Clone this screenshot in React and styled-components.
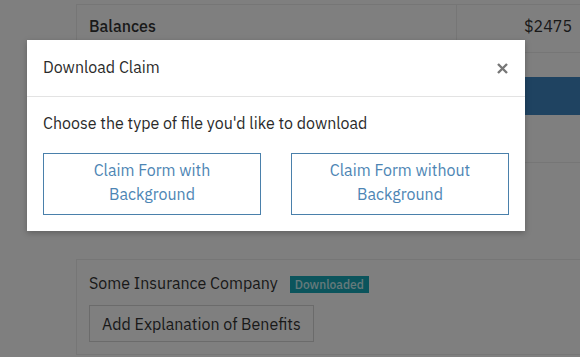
import React from "react";
import styled, { createGlobalStyle } from "styled-components";

const Global = createGlobalStyle`
  html, body { margin: 0; padding: 0; background: #fff; }
  body { font-family: "IBM Plex Sans", Roboto, "Liberation Sans", sans-serif; color: #333; }
  * { box-sizing: border-box; }
`;

const Page = styled.div`
  position: relative;
  width: 580px;
  height: 357px;
  overflow: hidden;
  padding: 4px 0 0 76px;
  display: flex;
  flex-direction: column;
`;

const Table = styled.div`
  width: 560px;
  border-left: 1px solid #ececec;
  border-top: 1px solid #ececec;
`;

const Row = styled.div`
  display: grid;
  grid-template-columns: 380px 1fr;
  height: 48px;
  border-bottom: 1px solid #ececec;
`;

const Cell = styled.div`
  display: flex;
  align-items: center;
  padding: 0 12px 6px 12px;
  font-size: 16px;
  font-weight: ${(p) => (p.$bold ? 500 : 400)};
  color: #333;
  justify-content: ${(p) => (p.$right ? "flex-end" : "flex-start")};
  border-right: ${(p) => (p.$divider ? "1px solid #ececec" : "none")};
  padding-right: ${(p) => (p.$right ? "64px" : "12px")};
`;

const Spacer = styled.div`
  height: ${(p) => p.$h}px;
`;

const BlueBar = styled.div`
  width: 560px;
  height: 38px;
  background: #3e86c2;
`;

const Section = styled.div`
  width: 560px;
  height: 48px;
  border-bottom: 1px solid #ececec;
`;

const Card = styled.div`
  width: 560px;
  height: 96px;
  border: 1px solid #ececec;
  padding: 12px 12px;
  display: flex;
  flex-direction: column;
  gap: 11px;
`;

const CardTitle = styled.div`
  display: flex;
  align-items: center;
  gap: 12px;
  font-size: 16px;
  line-height: 22px;
  color: #333;
`;

const Badge = styled.span`
  display: inline-flex;
  align-items: center;
  height: 17px;
  margin-top: 3px;
  padding: 0 5px;
  background: #17a9b8;
  color: #cdf3f6;
  font-size: 12px;
  font-weight: 500;
`;

const GhostButton = styled.button`
  align-self: flex-start;
  height: 37px;
  padding: 0 12px;
  background: #fff;
  border: 1px solid #d6d6d6;
  font-family: inherit;
  font-size: 16px;
  color: #333;
`;

const Overlay = styled.div`
  position: absolute;
  inset: 0;
  background: rgba(0, 0, 0, 0.5);
`;

const Modal = styled.div`
  position: absolute;
  left: 27px;
  top: 40px;
  width: 498px;
  background: #fff;
  box-shadow: 0 2px 6px rgba(0, 0, 0, 0.25);
`;

const ModalHeader = styled.div`
  display: flex;
  align-items: center;
  justify-content: space-between;
  height: 57px;
  padding: 0 16px 3px 16px;
  border-bottom: 1px solid #e3e3e3;
`;

const ModalTitle = styled.div`
  font-size: 16px;
  color: #2a2a2a;
`;

const Close = styled.button`
  display: flex;
  align-items: center;
  justify-content: center;
  width: 20px;
  height: 20px;
  padding: 0;
  margin-right: -3px;
  margin-top: 4px;
  border: none;
  background: none;
`;

const ModalBody = styled.div`
  padding: 14px 16px 16px;
  display: flex;
  flex-direction: column;
  gap: 18px;
`;

const Prompt = styled.div`
  font-size: 16px;
  line-height: 24px;
  color: #2a2a2a;
`;

const Choices = styled.div`
  display: grid;
  grid-template-columns: 218px 218px;
  justify-content: space-between;
`;

const Choice = styled.button`
  height: 62px;
  background: #fff;
  border: 1px solid #4a80ab;
  color: #4d85b4;
  font-family: inherit;
  font-size: 16px;
  line-height: 24px;
  padding: 4px 20px 8px;
  text-align: center;
`;

export default function App() {
  return (
    <>
      <Global />
      <Page>
        <Table>
          <Row>
            <Cell $bold $divider>Balances</Cell>
            <Cell $right>$2475</Cell>
          </Row>
        </Table>
        <Spacer $h={24} />
        <BlueBar />
        <Section />
        <Spacer $h={96} />
        <Card>
          <CardTitle>
            Some Insurance Company
            <Badge>Downloaded</Badge>
          </CardTitle>
          <GhostButton>Add Explanation of Benefits</GhostButton>
        </Card>
        <Overlay />
        <Modal>
          <ModalHeader>
            <ModalTitle>Download Claim</ModalTitle>
            <Close aria-label="Close">
              <svg width="11" height="11" viewBox="0 0 11 11">
                <path d="M1 1 L10 10 M10 1 L1 10" stroke="#777" strokeWidth="2.4" strokeLinecap="butt" />
              </svg>
            </Close>
          </ModalHeader>
          <ModalBody>
            <Prompt>Choose the type of file you'd like to download</Prompt>
            <Choices>
              <Choice>Claim Form with Background</Choice>
              <Choice>Claim Form without Background</Choice>
            </Choices>
          </ModalBody>
        </Modal>
      </Page>
    </>
  );
}
